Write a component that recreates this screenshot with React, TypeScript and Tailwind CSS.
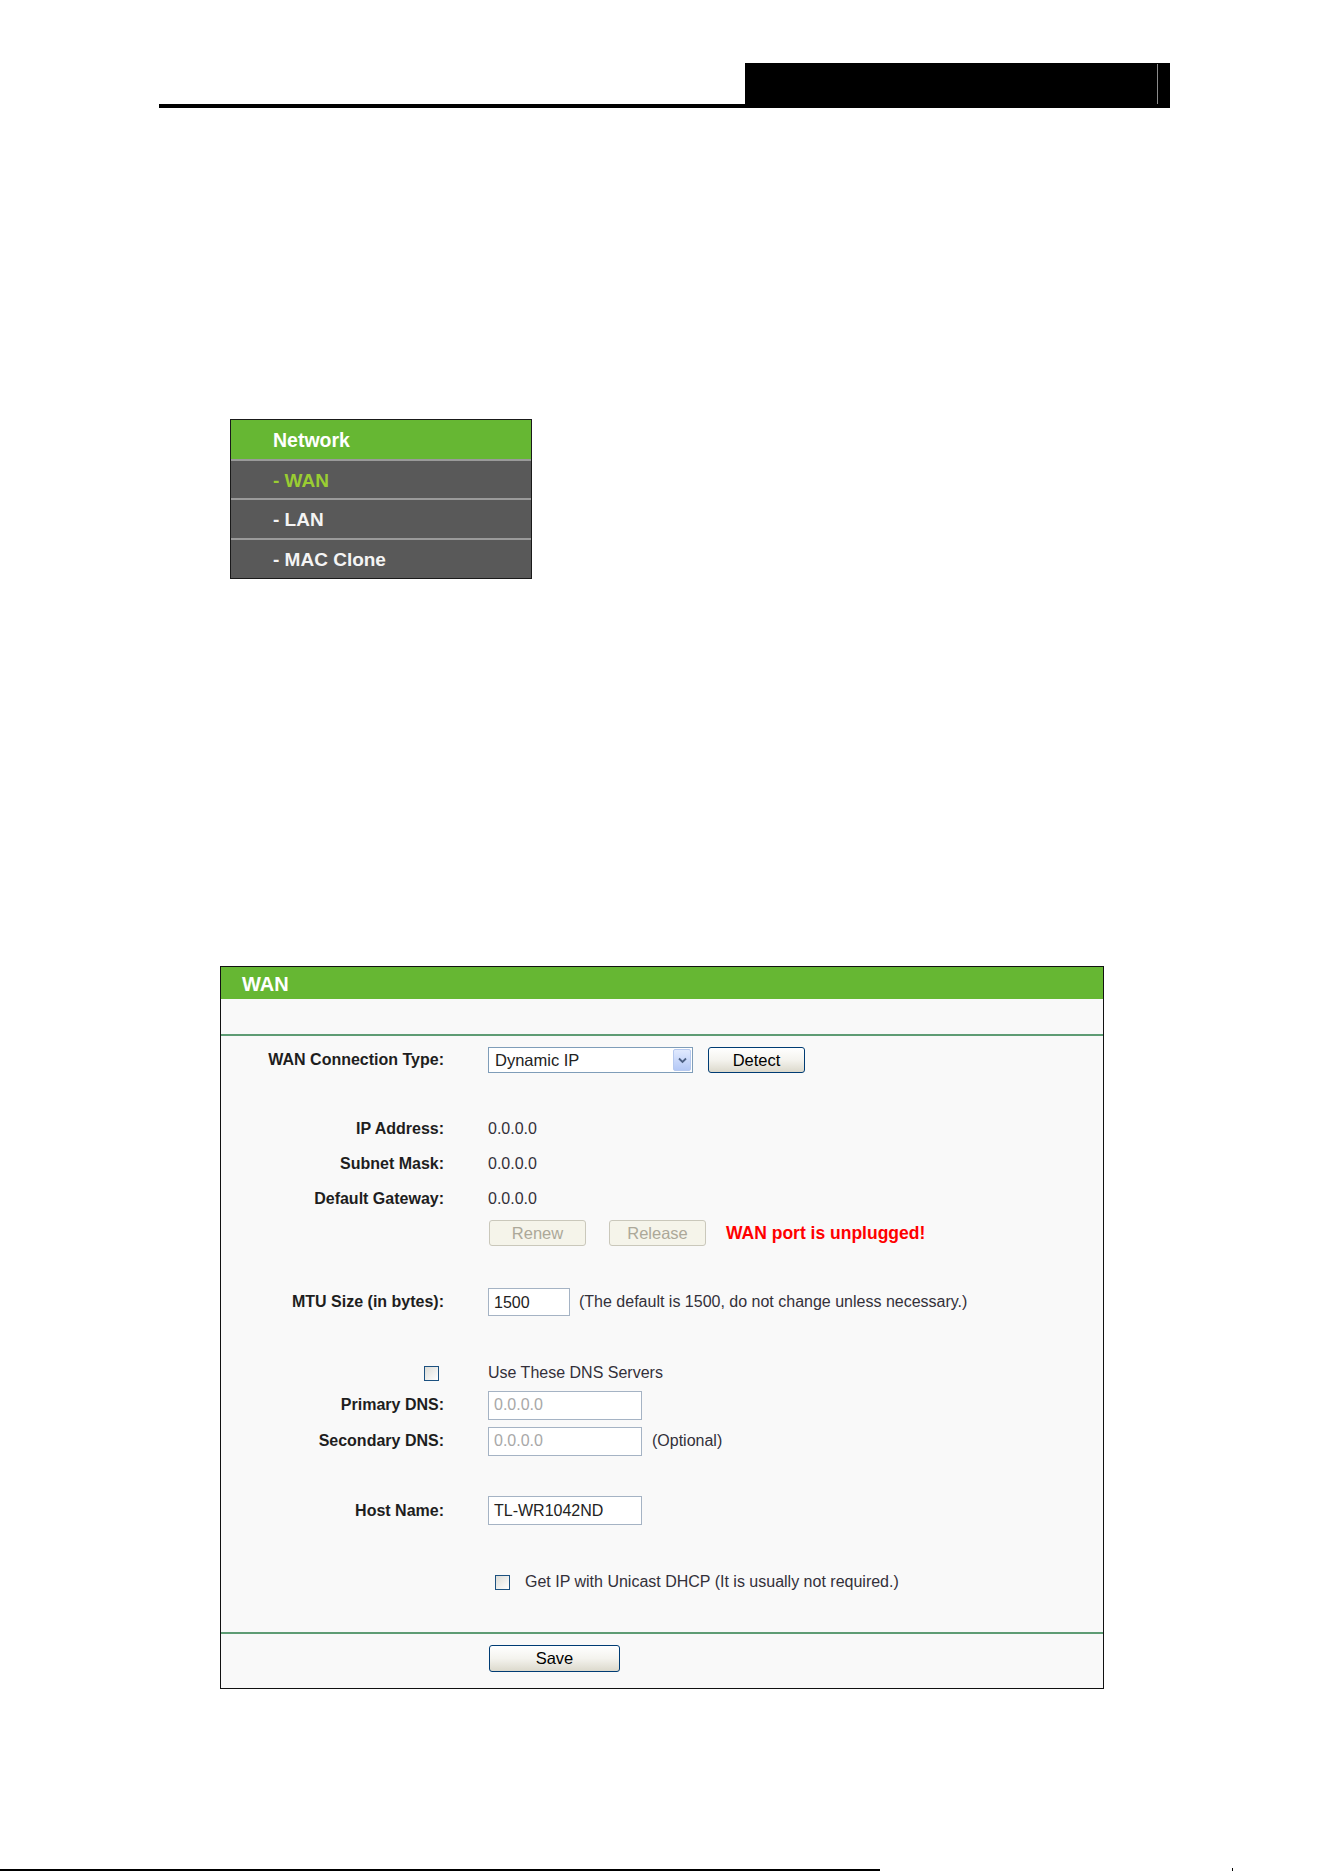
import React from "react";

const font = "font-['Liberation_Sans',Arial,sans-serif]";

function Label({ children }: { children?: React.ReactNode }) {
  return (
    <div className="flex justify-end items-center text-[16px] font-bold text-[#1e1e1e]">
      {children}
    </div>
  );
}

function Row({
  h,
  label,
  children,
}: {
  h: string;
  label?: React.ReactNode;
  children?: React.ReactNode;
}) {
  return (
    <div className={`grid grid-cols-[223px_1fr] gap-x-[44px] items-center ${h}`}>
      <Label>{label}</Label>
      <div className="flex items-center text-[16px] text-[#33303a]">
        {children}
      </div>
    </div>
  );
}

function XpButton({
  children,
  className,
}: {
  children: React.ReactNode;
  className: string;
}) {
  return (
    <button
      type="button"
      className={`flex items-center justify-center rounded-[3px] border border-[#003c74] bg-linear-to-b from-white via-[#f4f3ee] to-[#dcd9cc] text-[16.5px] text-black ${className}`}
    >
      {children}
    </button>
  );
}

function Disabled({ children }: { children: React.ReactNode }) {
  return (
    <div className="flex h-[26px] w-[97px] items-center justify-center rounded-[3px] border border-[#cac8bb] bg-[#f5f4ea] text-[16.5px] text-[#aca899]">
      {children}
    </div>
  );
}

function Check({ className = "" }: { className?: string }) {
  return (
    <div
      className={`h-[15px] w-[15px] border border-[#1c5180] bg-linear-to-br from-[#dcdcd7] to-white ${className}`}
    />
  );
}

function TextBox({
  value,
  w,
  disabled,
}: {
  value: string;
  w: string;
  disabled?: boolean;
}) {
  return (
    <div
      className={`flex h-[29px] items-center border border-[#a5b3c4] bg-white pl-[5px] text-[16px] ${w} ${
        disabled ? "text-[#a8a8a8]" : "text-[#222]"
      }`}
    >
      {value}
    </div>
  );
}

export default function App() {
  return (
    <div className={`relative h-[1872px] w-[1324px] bg-white ${font}`}>
      {/* page header */}
      <div className="pt-[63px] pl-[159px]">
        <div className="flex h-[45px] w-[1011px] items-end">
          <div className="h-[4px] flex-1 bg-black" />
          <div className="flex h-[45px] w-[425px] justify-end bg-black pr-[12px] pt-[1px]">
            <div className="h-[40px] w-[1px] bg-[#8a8a8a]" />
          </div>
        </div>
      </div>

      {/* side menu */}
      <div className="ml-[230px] mt-[311px] w-[302px] border border-[#1a1a1a] text-[19px] font-bold">
        <div className="flex h-[39px] items-center bg-[#66b733] pl-[42px] pt-[3px] text-[19.5px] text-white">
          Network
        </div>
        <div className="h-[2px] bg-[#9a9a9a]" />
        <div className="flex h-[37px] items-center bg-[#595959] pl-[42px] pt-[3px] text-[#9acd32]">
          - WAN
        </div>
        <div className="h-[2px] bg-[#9a9a9a]" />
        <div className="flex h-[38px] items-center bg-[#595959] pl-[42px] pt-[3px] text-[#f4f4f4]">
          - LAN
        </div>
        <div className="h-[2px] bg-[#9a9a9a]" />
        <div className="flex h-[38px] items-center bg-[#595959] pl-[42px] pt-[3px] text-[#f4f4f4]">
          - MAC Clone
        </div>
      </div>

      {/* WAN panel */}
      <div className="ml-[220px] mt-[387px] w-[884px] border border-[#111] bg-[#f9f9f9]">
        <div className="flex h-[32px] items-center bg-[#66b733] pl-[21px] pt-[1px] text-[20px] font-bold text-white">
          WAN
        </div>
        <div className="h-[35px]" />
        <div className="h-[2px] bg-[#5e9c74]" />

        <Row h="h-[48px]" label="WAN Connection Type:">
          <div className="flex h-[26px] w-[205px] items-center justify-between border border-[#7f9db9] bg-white pl-[6px] pr-[1px] text-[16.5px] text-[#222]">
            <span>Dynamic IP</span>
            <div className="flex h-[22px] w-[18px] items-center justify-center rounded-[2px] border border-[#b6c9ef] bg-linear-to-b from-[#e1eafe] to-[#b4c8f6]">
              <svg width="9" height="7" viewBox="0 0 9 7">
                <path d="M1 1.5 L4.5 5 L8 1.5" fill="none" stroke="#4d6185" strokeWidth="1.8" />
              </svg>
            </div>
          </div>
          <XpButton className="ml-[15px] h-[26px] w-[97px]">Detect</XpButton>
        </Row>

        <div className="h-[28px]" />
        <Row h="h-[34px]" label="IP Address:">0.0.0.0</Row>
        <Row h="h-[36px]" label="Subnet Mask:">0.0.0.0</Row>
        <Row h="h-[34px]" label="Default Gateway:">0.0.0.0</Row>
        <Row h="h-[34px]">
          <div className="ml-[1px] flex items-center">
            <Disabled>Renew</Disabled>
            <div className="ml-[23px]">
              <Disabled>Release</Disabled>
            </div>
            <span className="ml-[20px] text-[17.5px] font-bold text-[#ff0000]">
              WAN port is unplugged!
            </span>
          </div>
        </Row>

        <div className="h-[38px]" />
        <Row h="h-[28px]" label="MTU Size (in bytes):">
          <div className="flex h-[28px] w-[82px] items-start border border-[#a5b3c4] bg-white pl-[5px] pt-[2px] text-[#222]">
            1500
          </div>
          <span className="ml-[9px]">
            (The default is 1500, do not change unless necessary.)
          </span>
        </Row>

        <div className="h-[42px]" />
        <Row h="h-[30px]" label={<Check className="mr-[5px]" />}>
          Use These DNS Servers
        </Row>
        <Row h="h-[34px]" label="Primary DNS:">
          <TextBox value="0.0.0.0" w="w-[154px]" disabled />
        </Row>
        <Row h="h-[38px]" label="Secondary DNS:">
          <TextBox value="0.0.0.0" w="w-[154px]" disabled />
          <span className="ml-[10px]">(Optional)</span>
        </Row>

        <div className="h-[36px]" />
        <Row h="h-[28px]" label="Host Name:">
          <TextBox value="TL-WR1042ND" w="w-[154px]" />
        </Row>

        <div className="h-[44px]" />
        <Row h="h-[28px]">
          <Check className="ml-[7px]" />
          <span className="ml-[15px]">
            Get IP with Unicast DHCP (It is usually not required.)
          </span>
        </Row>

        <div className="h-[36px]" />
        <div className="h-[2px] bg-[#5e9c74]" />
        <div className="grid h-[54px] grid-cols-[223px_1fr] gap-x-[44px] pt-[11px]">
          <div />
          <XpButton className="ml-[1px] h-[27px] w-[131px]">Save</XpButton>
        </div>
      </div>

      {/* page footer rule */}
      <div className="mt-[179px] flex items-end">
        <div className="h-[2px] w-[880px] bg-black" />
        <div className="ml-[352px] h-[3px] w-[1px] bg-black" />
      </div>
    </div>
  );
}
